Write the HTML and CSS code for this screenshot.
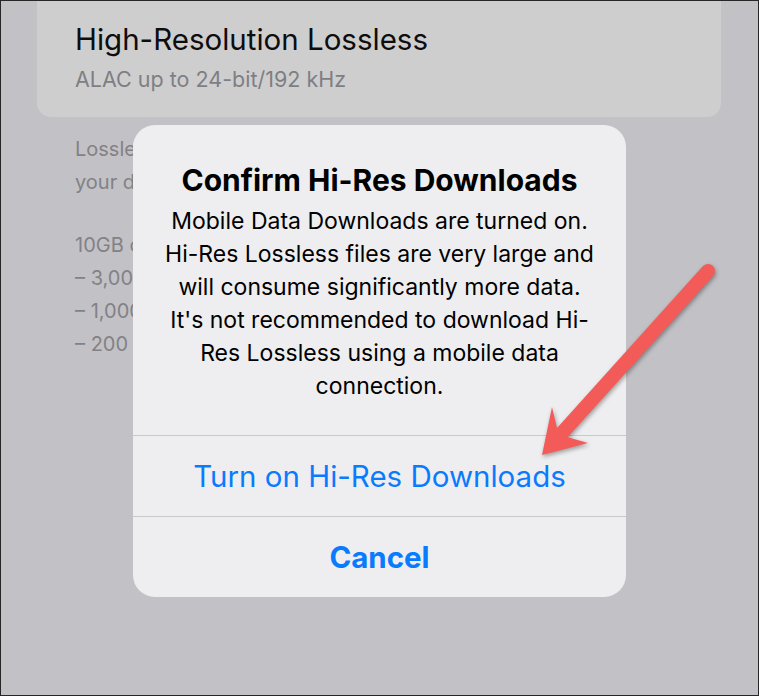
FILE: index.html
```html
<!DOCTYPE html>
<html>
<head>
  <title>Confirm Hi-Res Downloads</title>
  <link rel="stylesheet" href="styles.css">
</head>
<body>

<div class="screen">

  <div class="option-card">
    <div class="option-title">High-Resolution Lossless</div>
    <div class="option-sub">ALAC up to 24-bit/192 kHz</div>
  </div>

  <div class="footnote">
    <p>Lossless files use significantly more space on<br>your device.</p>
    <p>10GB of space can store approximately:<br>
    – 3,000 songs at high quality<br>
    – 1,000 songs with Lossless<br>
    – 200 songs with Hi-Res Lossless</p>
  </div>

  <!-- alert sits over the settings page -->
  <div class="alert">
    <div class="alert-body">
      <h2 class="alert-title">Confirm Hi-Res Downloads</h2>
      <p class="alert-msg">Mobile Data Downloads are turned on.<br>
      Hi-Res Lossless files are very large and<br>
      will consume significantly more data.<br>
      It's not recommended to download Hi-<br>
      Res Lossless using a mobile data<br>
      connection.</p>
    </div>
    <button class="alert-btn">Turn on Hi-Res Downloads</button>
    <button class="alert-btn alert-btn-bold">Cancel</button>
  </div>

  <svg class="pointer" width="759" height="696" viewBox="0 0 759 696">
    <line x1="708" y1="271" x2="562" y2="433" stroke="#f25b58" stroke-width="14" stroke-linecap="round"/>
    <polygon points="542,455 552,407 557,428 567,437 588,443" fill="#f25b58"/>
  </svg>

</div>

</body>
</html>
```

FILE: styles.css
```css
body {
  margin: 0;
  font-family: "Inter", "Noto Sans", sans-serif;
}

.screen {
  position: relative;
  width: 759px;
  height: 696px;
  box-sizing: border-box;
  border: 1px solid #262626;
  background-color: #c2c1c6;
  overflow: hidden;
}

.option-card {
  margin: -20px 37px 0 36px;
  padding: 39px 38px 0 38px;
  height: 97px;
  background: #cececf;
  border-radius: 0 0 14px 14px;
}

.option-title {
  font-size: 29.5px;
  line-height: 38px;
  color: #0d0d0d;
}

.option-sub {
  margin-top: 8px;
  font-size: 21.5px;
  color: #7f7f83;
}

.footnote {
  padding: 0 74px;
  color: #828286;
  font-size: 20px;
  line-height: 33px;
}

.footnote p {
  margin: 16px 0 30px;
}

.alert {
  position: absolute;
  left: 132px;
  top: 124px;
  width: 493px;
  height: 472px;
  background: #eeeef0;
  border-radius: 22px;
  display: flex;
  flex-direction: column;
  overflow: hidden;
}

.alert-body {
  padding: 36px 10px 32px;
  text-align: center;
  color: #000;
}

.alert-title {
  margin: 0;
  font-size: 30px;
  line-height: 38px;
  font-weight: 700;
}

.alert-msg {
  margin: 6px 0 0;
  font-size: 23px;
  line-height: 33px;
}

.alert-btn {
  flex: 1;
  border: none;
  border-top: 1.5px solid #c9c9cd;
  background: transparent;
  color: #0b7bfe;
  font-family: inherit;
  font-size: 29.5px;
  padding: 0;
}

.alert-btn-bold {
  font-weight: 700;
}

.pointer {
  position: absolute;
  left: -1px;
  top: -1px;
  filter: drop-shadow(1px 2px 2px rgba(0, 0, 0, 0.35));
}
```
